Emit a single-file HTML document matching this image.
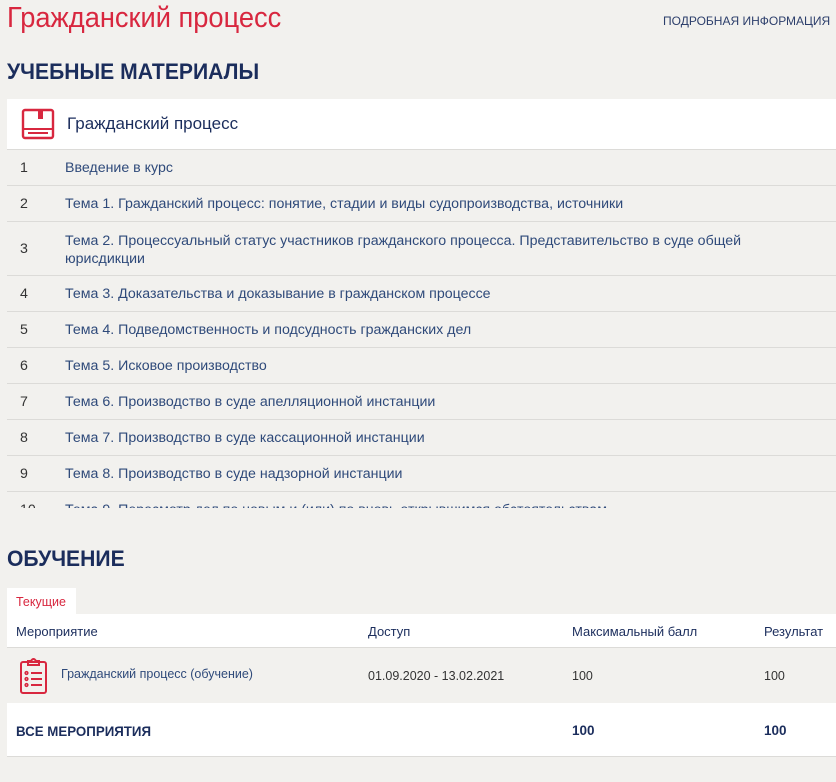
<!DOCTYPE html>
<html><head><meta charset="utf-8"><style>
body{margin:0;background:#f2f1ee;font-family:"Liberation Sans","DejaVu Sans",sans-serif;width:836px;height:782px;overflow:hidden;position:relative;color:#2c3e6b}
.abs{position:absolute;white-space:nowrap}
.row{position:absolute;left:7px;right:0;border-bottom:1px solid #dcdbd8;font-size:14.2px;color:#2f4a7a}
.row .n{position:absolute;left:13px;color:#333}
.row .t{position:absolute;left:58px}
</style></head><body>
<div class="abs" style="left:7px;top:2px;font-size:29px;color:#d8273f;transform:scaleX(0.94);transform-origin:left">Гражданский процесс</div>
<div class="abs" style="left:663px;top:14px;font-size:12px;color:#2c3e6b">ПОДРОБНАЯ ИНФОРМАЦИЯ &nbsp;(</div>
<div class="abs" style="left:7px;top:59px;font-size:22px;font-weight:bold;color:#1b2d5c;transform:scaleX(0.96);transform-origin:left">УЧЕБНЫЕ МАТЕРИАЛЫ</div>
<div class="abs" style="left:7px;top:99px;width:829px;height:50px;background:#fff;border-bottom:1px solid #dcdbd8"></div>
<svg class="abs" style="left:21px;top:108px" width="34" height="32" viewBox="0 0 34 32"><rect x="2" y="2" width="30" height="28" rx="2" fill="none" stroke="#d8273f" stroke-width="2.4"/><rect x="17" y="2" width="5" height="9" fill="#d8273f"/><line x1="2" y1="21" x2="32" y2="21" stroke="#d8273f" stroke-width="2"/><line x1="7" y1="25" x2="27" y2="25" stroke="#d8273f" stroke-width="2"/></svg>
<div class="abs" style="left:67px;top:114px;font-size:17px;color:#1b2d5c">Гражданский процесс</div>
<div style="position:absolute;left:0;top:150px;width:836px;height:358px;overflow:hidden">
<div class="row" style="top:0;height:35px"><span class="n" style="top:10px">1</span><span class="t" style="top:10px">Введение в курс</span></div>
<div class="row" style="top:36px;height:35px"><span class="n" style="top:10px">2</span><span class="t" style="top:10px">Тема 1. Гражданский процесс: понятие, стадии и виды судопроизводства, источники</span></div>
<div class="row" style="top:72px;height:53px"><span class="n" style="top:19px">3</span><span class="t" style="top:10px;line-height:18px">Тема 2. Процессуальный статус участников гражданского процесса. Представительство в суде общей<br>юрисдикции</span></div>
<div class="row" style="top:126px;height:35px"><span class="n" style="top:10px">4</span><span class="t" style="top:10px">Тема 3. Доказательства и доказывание в гражданском процессе</span></div>
<div class="row" style="top:162px;height:35px"><span class="n" style="top:10px">5</span><span class="t" style="top:10px">Тема 4. Подведомственность и подсудность гражданских дел</span></div>
<div class="row" style="top:198px;height:35px"><span class="n" style="top:10px">6</span><span class="t" style="top:10px">Тема 5. Исковое производство</span></div>
<div class="row" style="top:234px;height:35px"><span class="n" style="top:10px">7</span><span class="t" style="top:10px">Тема 6. Производство в суде апелляционной инстанции</span></div>
<div class="row" style="top:270px;height:35px"><span class="n" style="top:10px">8</span><span class="t" style="top:10px">Тема 7. Производство в суде кассационной инстанции</span></div>
<div class="row" style="top:306px;height:35px"><span class="n" style="top:10px">9</span><span class="t" style="top:10px">Тема 8. Производство в суде надзорной инстанции</span></div>
<div class="row" style="top:342px;height:35px"><span class="n" style="top:10px">10</span><span class="t" style="top:10px">Тема 9. Пересмотр дел по новым и (или) по вновь открывшимся обстоятельствам</span></div>
</div>
<div class="abs" style="left:7px;top:546px;font-size:22px;font-weight:bold;color:#1b2d5c;transform:scaleX(0.96);transform-origin:left">ОБУЧЕНИЕ</div>
<div class="abs" style="left:7px;top:588px;width:69px;height:26px;background:#fff"></div>
<div class="abs" style="left:16px;top:595px;font-size:12.5px;color:#d8273f">Текущие</div>
<div class="abs" style="left:7px;top:614px;width:829px;height:33px;background:#fff;border-bottom:1px solid #dcdbd8"></div>
<div class="abs" style="left:16px;top:624px;font-size:13px;color:#1b2d5c">Мероприятие</div>
<div class="abs" style="left:368px;top:624px;font-size:13px;color:#1b2d5c">Доступ</div>
<div class="abs" style="left:572px;top:624px;font-size:13px;color:#1b2d5c">Максимальный балл</div>
<div class="abs" style="left:764px;top:624px;font-size:13px;color:#1b2d5c">Результат</div>
<svg class="abs" style="left:19px;top:657px" width="30" height="38" viewBox="0 0 30 38"><rect x="2" y="5" width="25" height="31" rx="2" fill="none" stroke="#d8273f" stroke-width="2"/><path d="M9 8 L9 4 L12 4 Q14.5 0 17 4 L20 4 L20 8 Z" fill="none" stroke="#d8273f" stroke-width="2"/><g fill="none" stroke="#d8273f" stroke-width="1.6"><circle cx="7.5" cy="16" r="1.3"/><circle cx="7.5" cy="22" r="1.3"/><circle cx="7.5" cy="28" r="1.3"/></g><g stroke="#d8273f" stroke-width="2"><line x1="12" y1="16" x2="23" y2="16"/><line x1="12" y1="22" x2="23" y2="22"/><line x1="12" y1="28" x2="23" y2="28"/></g></svg>
<div class="abs" style="left:61px;top:667px;font-size:12.5px;color:#2f4a7a">Гражданский процесс (обучение)</div>
<div class="abs" style="left:368px;top:669px;font-size:12.5px;color:#333">01.09.2020 - 13.02.2021</div>
<div class="abs" style="left:572px;top:669px;font-size:12.5px;color:#333">100</div>
<div class="abs" style="left:764px;top:669px;font-size:12.5px;color:#333">100</div>
<div class="abs" style="left:7px;top:703px;width:829px;height:53px;background:#fff;border-bottom:1px solid #dcdbd8"></div>
<div class="abs" style="left:16px;top:723px;font-size:14px;font-weight:bold;color:#1b2d5c;transform:scaleX(0.95);transform-origin:left">ВСЕ МЕРОПРИЯТИЯ</div>
<div class="abs" style="left:572px;top:723px;font-size:13.5px;font-weight:bold;color:#1b2d5c">100</div>
<div class="abs" style="left:764px;top:723px;font-size:13.5px;font-weight:bold;color:#1b2d5c">100</div>
</body></html>
